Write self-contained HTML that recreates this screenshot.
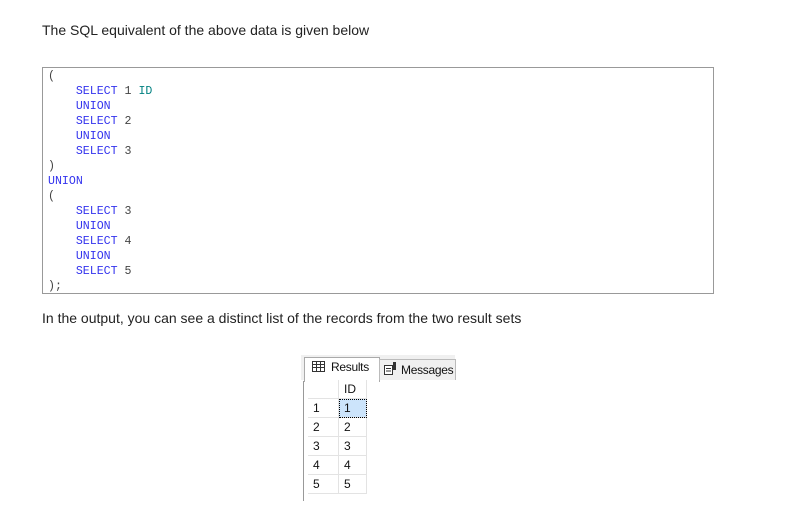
<!DOCTYPE html>
<html><head><style>
body{margin:0;width:799px;height:511px;background:#fff;position:relative;font-family:"Liberation Sans",sans-serif;overflow:hidden}
.t{position:absolute;left:42px;font-size:14px;color:#222}
.code{position:absolute;left:42px;top:67px;width:670px;height:225px;border:1px solid #999;background:#fff}
.code pre{margin:0;position:absolute;left:5px;top:1px;font-family:"Liberation Mono",monospace;font-size:11.6px;line-height:15px;color:#444}
.k{color:#3333ee}.i{color:#008080}
.shot{position:absolute;left:301px;top:355px;width:154px;height:146px;background:#fff}
.tabs{position:absolute;left:0;top:0;width:154px;height:25px;background:#f0f0f0}
.tab{position:absolute;font-size:12px;color:#111;letter-spacing:-0.3px}
.g{position:absolute;font-size:12px;color:#111}
.cell{position:absolute;box-sizing:border-box;border-right:1px solid #e3e3e3;border-bottom:1px solid #e3e3e3;height:19px;line-height:18px;padding-left:5px}
</style></head><body>
<div class="t" style="top:22px">The SQL equivalent of the above data is given below</div>
<div class="code"><pre>(
    <span class="k">SELECT</span> 1 <span class="i">ID</span>
    <span class="k">UNION</span>
    <span class="k">SELECT</span> 2
    <span class="k">UNION</span>
    <span class="k">SELECT</span> 3
)
<span class="k">UNION</span>
(
    <span class="k">SELECT</span> 3
    <span class="k">UNION</span>
    <span class="k">SELECT</span> 4
    <span class="k">UNION</span>
    <span class="k">SELECT</span> 5
);</pre></div>
<div class="t" style="top:310px">In the output, you can see a distinct list of the records from the two result sets</div>
<div class="shot">
 <div class="tabs"></div>
 <div style="position:absolute;left:3px;top:2px;width:74px;height:24px;background:#fff;border:1px solid #aaa;border-bottom:none"></div>
 <div style="position:absolute;left:78px;top:4px;width:75px;height:20px;border:1px solid #bbb;border-bottom:none;background:#f0f0f0"></div>
 <svg style="position:absolute;left:11px;top:6px" width="13" height="11"><rect x="0.5" y="0.5" width="12" height="10" fill="#fff" stroke="#333"/><path d="M0 3.5H13M0 6.5H13M4.5 0V11M8.5 0V11" stroke="#333"/></svg>
 <div class="tab" style="left:30px;top:5px">Results</div>
 <svg style="position:absolute;left:83px;top:7px" width="13" height="13"><rect x="0.5" y="3.5" width="8" height="9" fill="#fff" stroke="#333"/><path d="M2 6.5H7M2 9H7" stroke="#333"/><rect x="9" y="0" width="3" height="8" fill="#333"/></svg>
 <div class="tab" style="left:100px;top:8px">Messages</div>
 <div style="position:absolute;left:2px;top:26px;width:1px;height:120px;background:#999"></div>
 <div class="g">
  <div class="cell" style="left:7px;top:25px;width:31px"></div>
  <div class="cell" style="left:38px;top:25px;width:28px">ID</div>
  <div class="cell" style="left:7px;top:44px;width:31px">1</div>
  <div class="cell" style="left:38px;top:44px;width:28px;background:#cce4fb;outline:1px dotted #000;outline-offset:-1px">1</div>
  <div class="cell" style="left:7px;top:63px;width:31px">2</div><div class="cell" style="left:38px;top:63px;width:28px">2</div>
  <div class="cell" style="left:7px;top:82px;width:31px">3</div><div class="cell" style="left:38px;top:82px;width:28px">3</div>
  <div class="cell" style="left:7px;top:101px;width:31px">4</div><div class="cell" style="left:38px;top:101px;width:28px">4</div>
  <div class="cell" style="left:7px;top:120px;width:31px">5</div><div class="cell" style="left:38px;top:120px;width:28px">5</div>
 </div>
</div>
</body></html>
